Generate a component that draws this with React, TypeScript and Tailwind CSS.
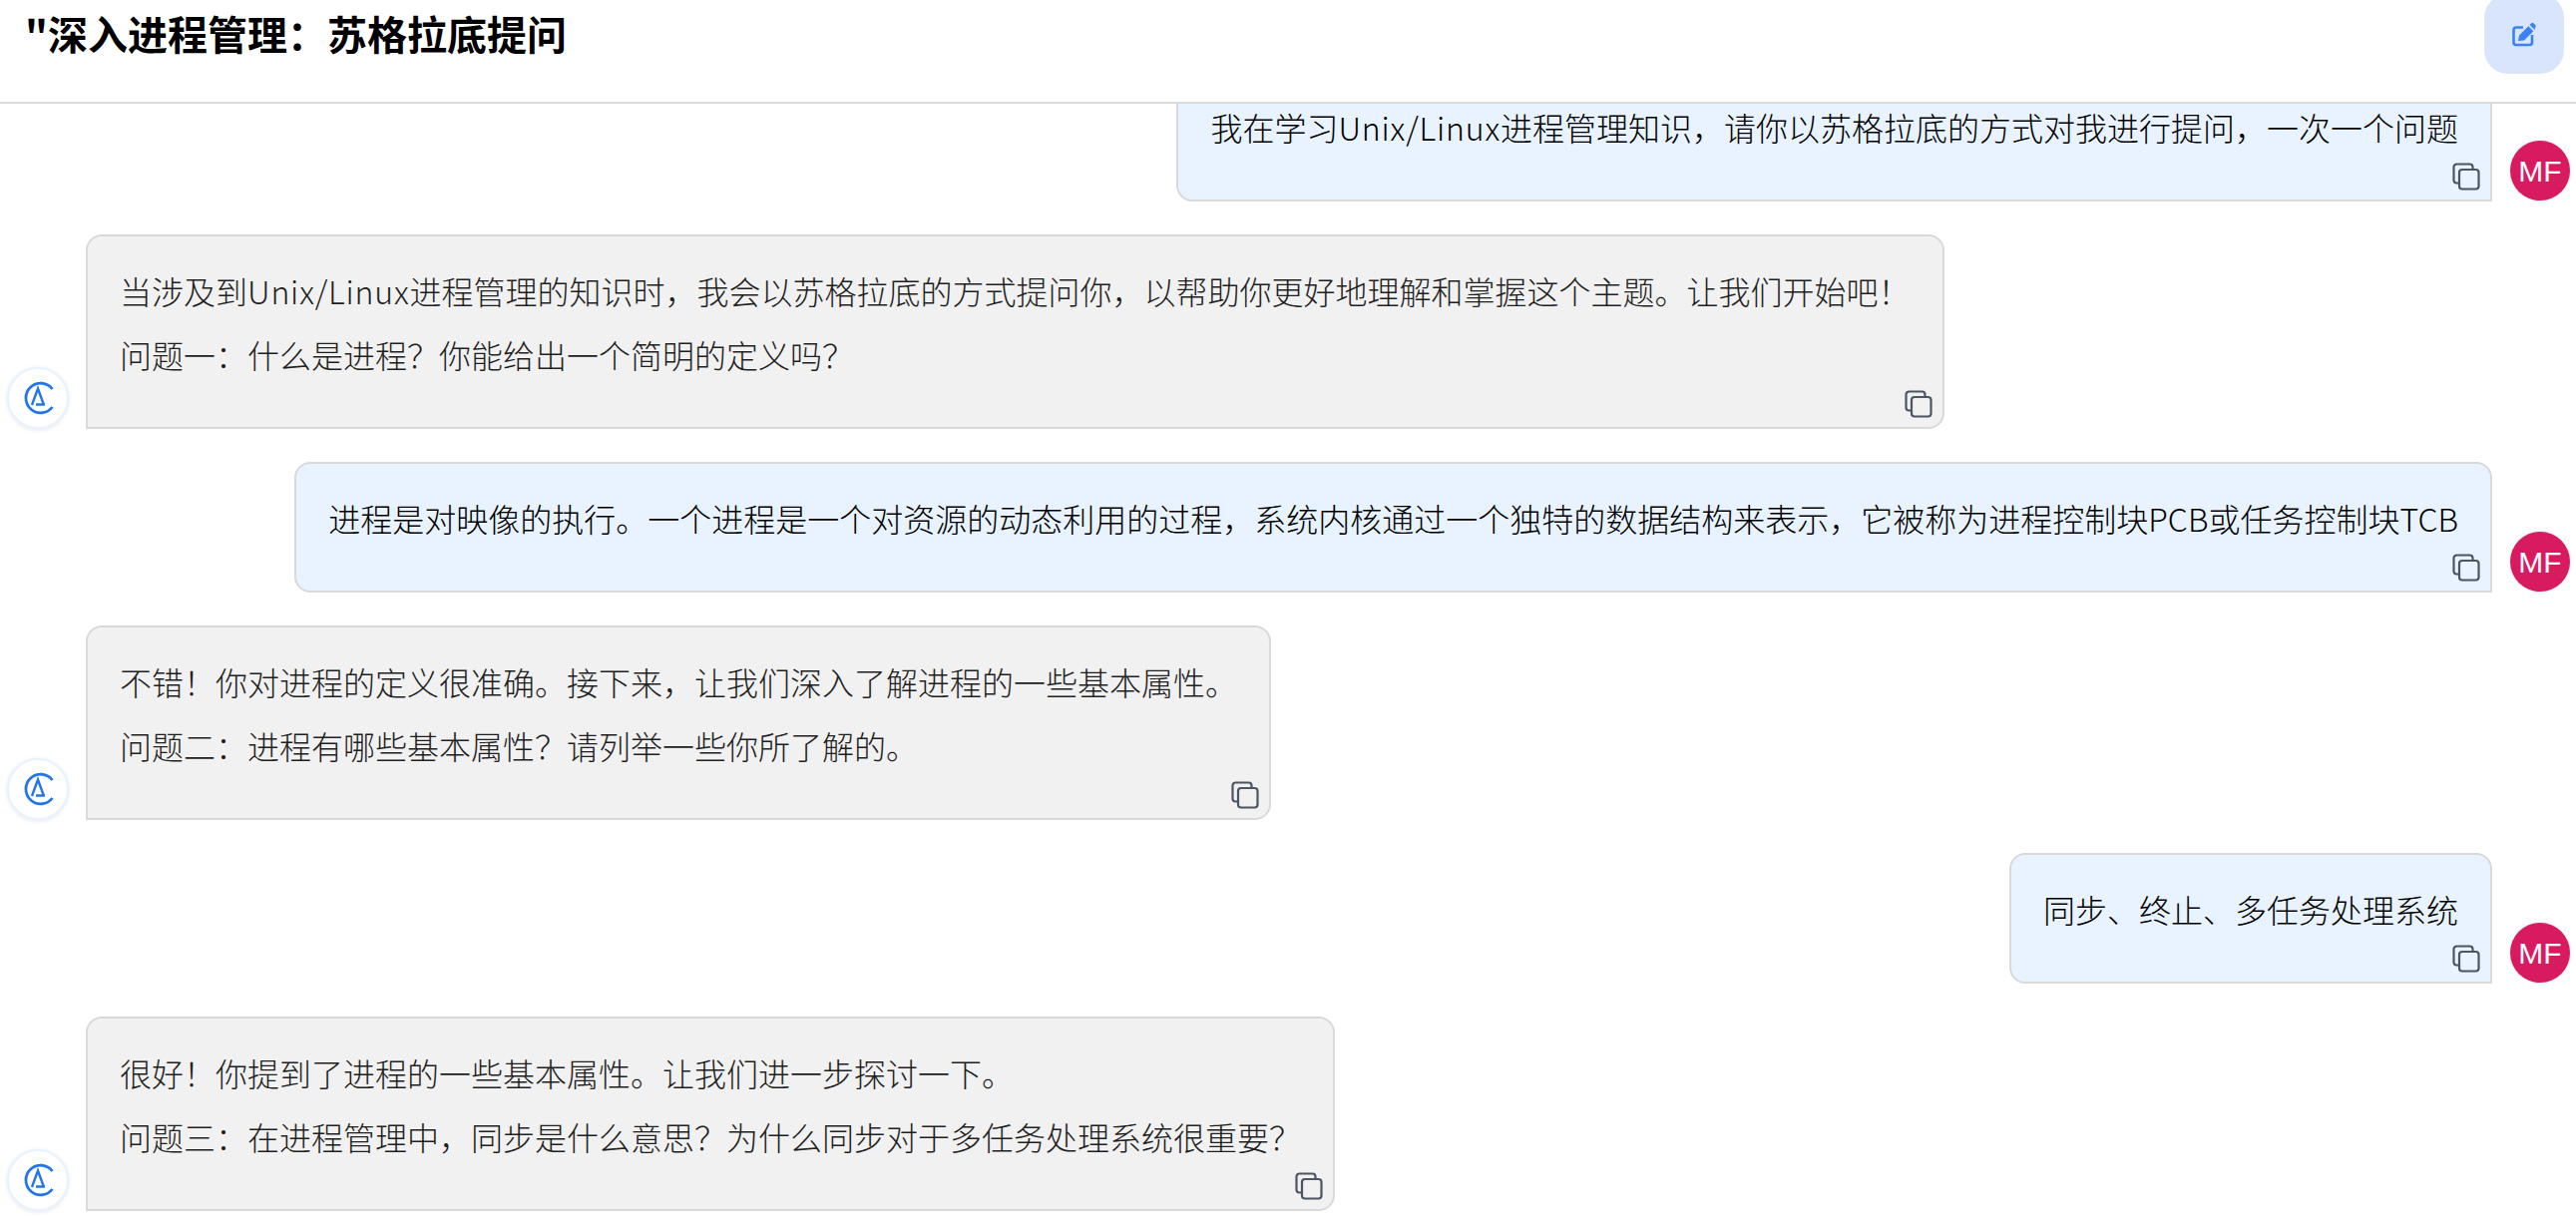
import React from 'react';

type Message = {
  role: 'user' | 'assistant';
  width: string;
  lines: string[];
};

const MESSAGES: Message[] = [
  {
    role: 'user',
    width: 'w-[1319px]',
    lines: ['我在学习Unix/Linux进程管理知识，请你以苏格拉底的方式对我进行提问，一次一个问题'],
  },
  {
    role: 'assistant',
    width: 'w-[1863px]',
    lines: [
      '当涉及到Unix/Linux进程管理的知识时，我会以苏格拉底的方式提问你，以帮助你更好地理解和掌握这个主题。让我们开始吧！',
      '问题一：什么是进程？你能给出一个简明的定义吗？',
    ],
  },
  {
    role: 'user',
    width: 'w-[2203px]',
    lines: ['进程是对映像的执行。一个进程是一个对资源的动态利用的过程，系统内核通过一个独特的数据结构来表示，它被称为进程控制块PCB或任务控制块TCB'],
  },
  {
    role: 'assistant',
    width: 'w-[1188px]',
    lines: ['不错！你对进程的定义很准确。接下来，让我们深入了解进程的一些基本属性。', '问题二：进程有哪些基本属性？请列举一些你所了解的。'],
  },
  { role: 'user', width: 'w-[484px]', lines: ['同步、终止、多任务处理系统'] },
  {
    role: 'assistant',
    width: 'w-[1252px]',
    lines: ['很好！你提到了进程的一些基本属性。让我们进一步探讨一下。', '问题三：在进程管理中，同步是什么意思？为什么同步对于多任务处理系统很重要？'],
  },
];

const CopyIcon = () => (
  <svg width="28" height="28" viewBox="0 0 28 28" fill="none" stroke="#4b5563" strokeWidth="2.2" aria-hidden="true">
    <path d="M6 20.5H4.5A3 3 0 0 1 1.5 17.5V4.5A3 3 0 0 1 4.5 1.5H17.5A3 3 0 0 1 20.5 4.5V6" />
    <rect x="7" y="7" width="19.5" height="19.5" rx="3" />
  </svg>
);

const EditIcon = () => (
  <svg width="24" height="25" viewBox="0 0 24 25" fill="none" aria-hidden="true">
    <path
      d="M11 5.5H4A2.5 2.5 0 0 0 1.5 8V20.5A2.5 2.5 0 0 0 4 23H17.5A2.5 2.5 0 0 0 20 20.5V13"
      stroke="#3b82f6"
      strokeWidth="2.6"
    />
    <path
      d="M6 19L7 13.5L16.3 4.2L21.3 9.2L12 18.5ZM17.6 2.9L19.2 1.3A1.6 1.6 0 0 1 21.4 1.3L23.2 3.1A1.6 1.6 0 0 1 23.2 5.3L22.6 7.9Z"
      fill="#3b82f6"
    />
  </svg>
);

const BotAvatar = () => (
  <div className="flex h-[62px] w-[62px] shrink-0 items-center justify-center rounded-full border-2 border-[#e8f3ff] bg-white shadow-[0_1px_4px_rgba(0,0,0,0.1)]">
    <svg width="34" height="34" viewBox="0 0 34 34" fill="none" stroke="#2476e8" aria-hidden="true">
      <path d="M31.5 8A14.8 14.8 0 1 0 31.5 26" strokeWidth="2.8" />
      <path d="M11 24L17 7.5L23 24M15 23.5H24" strokeWidth="2.4" />
    </svg>
  </div>
);

const UserAvatar = () => (
  <div className="mb-px flex h-[60px] w-[60px] shrink-0 items-center justify-center rounded-full bg-[#d81b60] font-['Liberation_Sans',sans-serif] text-[30px] text-white shadow-[0_0_3px_rgba(0,0,0,0.15)]">
    MF
  </div>
);

// "Unix/Linux" sits a touch wider in the picture than the CJK font sets it.
const MixedText = ({ text }: { text: string }) => (
  <>
    {text.split(/(Unix\/Linux)/).map((part, idx) =>
      idx % 2 === 1 ? (
        <span key={idx} className="tracking-[0.8px]">
          {part}
        </span>
      ) : (
        part
      ),
    )}
  </>
);

const ChatRow = ({ message }: { message: Message }) => {
  const isUser = message.role === 'user';
  return (
    <div className={'flex items-end ' + (isUser ? 'justify-end gap-[18px] pr-[6px]' : 'justify-start gap-[17px] pl-[7px]')}>
      {!isUser && <BotAvatar />}
      <div
        className={
          'relative rounded-[16px] border-2 border-[#d9d9d9] pt-[22px] pb-[41px] text-[32px] leading-[64px] font-light ' +
          message.width +
          ' ' +
          (isUser
            ? 'rounded-br-none bg-[#e8f3ff] pr-[32px] pl-[32px] text-right text-black'
            : 'rounded-bl-none bg-[#f1f1f1] pl-[32px] text-[#1f1f1f]')
        }
      >
        {message.lines.map((line) => (
          <p key={line} className="whitespace-nowrap">
            <MixedText text={line} />
          </p>
        ))}
        <div className="absolute right-[10px] bottom-[9px] flex">
          <CopyIcon />
        </div>
      </div>
      {isUser && <UserAvatar />}
    </div>
  );
};

export default function App() {
  return (
    <div className="flex h-[1235px] w-full flex-col overflow-hidden bg-white font-['Noto_Sans_CJK_SC','Noto_Sans',sans-serif]">
      <header className="flex h-[104px] shrink-0 items-start justify-between overflow-hidden border-b-2 border-[#d9d9d9] pr-3 pl-[25px]">
        <h1 className="mt-[5px] text-[40px] leading-[56px] font-bold text-black">"深入进程管理：苏格拉底提问</h1>
        <button
          type="button"
          className="-mt-[6px] flex h-20 w-20 items-center justify-center rounded-[24px] bg-[#d9e5fb]"
        >
          <EditIcon />
        </button>
      </header>
      <main className="flex min-h-0 flex-1 flex-col justify-end gap-[33px] overflow-hidden pb-[21px]">
        {MESSAGES.map((m) => (
          <ChatRow key={m.lines[0]} message={m} />
        ))}
      </main>
    </div>
  );
}
